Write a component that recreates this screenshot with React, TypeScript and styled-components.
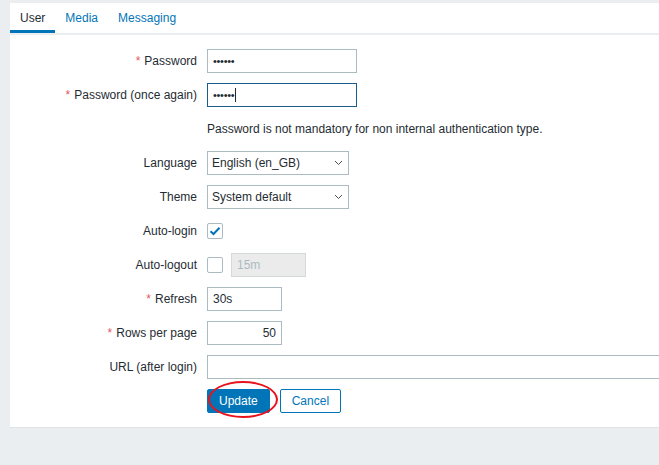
import React from "react";
import styled, { createGlobalStyle } from "styled-components";

const GlobalStyle = createGlobalStyle`
	html, body {
		margin: 0;
		padding: 0;
		background: #ebeef0;
		font-family: Arial, "Liberation Sans", sans-serif;
		font-size: 12px;
		color: #1f2c33;
		overflow: hidden;
	}
`;

const Page = styled.div`
	width: 659px;
	height: 465px;
	padding: 3px 0 0 10px;
	box-sizing: border-box;
	overflow: hidden;
`;

const Panel = styled.div`
	width: 700px;
	height: 425px;
	background: #fff;
	border-bottom: 1px solid #dfe4e7;
	box-sizing: border-box;
`;

const TabList = styled.div`
	display: flex;
	height: 30px;
	border-bottom: 2px solid #ebeef0;
`;

const Tab = styled.div<{ $active?: boolean }>`
	display: flex;
	align-items: center;
	padding: 0 10px;
	height: 30px;
	margin-bottom: -2px;
	color: ${(p) => (p.$active ? "#1f2c33" : "#0275b8")};
	border-bottom: 3px solid ${(p) => (p.$active ? "#0275b8" : "transparent")};
	box-sizing: border-box;
	padding-top: 2px;
	cursor: pointer;
`;

const Form = styled.div`
	display: grid;
	grid-template-columns: 187px auto;
	column-gap: 10px;
	row-gap: 10px;
	padding-top: 14px;
	align-items: center;
`;

const Label = styled.label`
	text-align: right;
	line-height: 24px;
	white-space: nowrap;
`;

const Req = styled.span`
	color: #e45959;
	margin-right: 4px;
`;

const Field = styled.div`
	display: flex;
	align-items: center;
	gap: 8px;
	min-height: 24px;
`;

const TextInput = styled.div<{ $w: number; $focus?: boolean; $disabled?: boolean; $right?: boolean }>`
	width: ${(p) => p.$w}px;
	height: 24px;
	box-sizing: border-box;
	border: 1px solid ${(p) => (p.$focus ? "#1a5c8c" : p.$disabled ? "#d4d9dc" : "#acbbc2")};
	background: ${(p) => (p.$disabled ? "#ebebeb" : "#fff")};
	color: ${(p) => (p.$disabled ? "#acbbc2" : "#1f2c33")};
	padding: 0 5px;
	display: flex;
	align-items: center;
	justify-content: ${(p) => (p.$right ? "flex-end" : "flex-start")};
	flex-shrink: 0;
`;

const Dots = styled.span`
	font-size: 11px;
	letter-spacing: -0.3px;
	line-height: 1;
`;

const Caret = styled.span`
	display: inline-block;
	width: 1px;
	height: 14px;
	background: #1f2c33;
	margin-left: 1px;
`;

const Select = styled.div<{ $w: number }>`
	width: ${(p) => p.$w}px;
	height: 24px;
	box-sizing: border-box;
	border: 1px solid #acbbc2;
	padding: 0 5px 0 4px;
	display: flex;
	align-items: center;
	justify-content: space-between;
`;

const Hint = styled.div`
	line-height: 24px;
	white-space: nowrap;
`;

const Box = styled.div`
	width: 16px;
	height: 16px;
	box-sizing: border-box;
	border: 1px solid #acbbc2;
	border-radius: 2px;
	display: flex;
	align-items: center;
	justify-content: center;
`;

const Buttons = styled.div`
	display: flex;
	gap: 10px;
	position: relative;
`;

const Button = styled.button<{ $primary?: boolean }>`
	height: 24px;
	padding: 0 11px;
	font-family: inherit;
	font-size: 12px;
	border-radius: 2px;
	border: 1px solid #0275b8;
	background: ${(p) => (p.$primary ? "#0275b8" : "#fff")};
	color: ${(p) => (p.$primary ? "#fff" : "#0275b8")};
	cursor: pointer;
`;

const Circle = styled.div`
	position: absolute;
	left: 1px;
	top: -8px;
	width: 70px;
	height: 37px;
	border: 2px solid #e8141b;
	border-radius: 50%;
	box-sizing: border-box;
	pointer-events: none;
`;

const Chevron = () => (
	<svg width="9" height="6" viewBox="0 0 9 6">
		<path d="M1 1l3.5 3.5L8 1" fill="none" stroke="#4f4f4f" strokeWidth="1" />
	</svg>
);

const Check = () => (
	<svg width="12" height="10" viewBox="0 0 12 10">
		<path d="M1.5 5.2l3 2.8L10.5 1.8" fill="none" stroke="#0275b8" strokeWidth="2" />
	</svg>
);

const Required = ({ children }: { children: React.ReactNode }) => (
	<Label>
		<Req>*</Req>
		{children}
	</Label>
);

export default function App() {
	return (
		<Page>
			<GlobalStyle />
			<Panel>
				<TabList>
					<Tab $active>User</Tab>
					<Tab>Media</Tab>
					<Tab>Messaging</Tab>
				</TabList>
				<Form>
					<Required>Password</Required>
					<Field>
						<TextInput $w={150}>
							<Dots>••••••</Dots>
						</TextInput>
					</Field>

					<Required>Password (once again)</Required>
					<Field>
						<TextInput $w={150} $focus>
							<Dots>••••••</Dots>
							<Caret />
						</TextInput>
					</Field>

					<span />
					<Hint>Password is not mandatory for non internal authentication type.</Hint>

					<Label>Language</Label>
					<Field>
						<Select $w={142}>
							English (en_GB)
							<Chevron />
						</Select>
					</Field>

					<Label>Theme</Label>
					<Field>
						<Select $w={142}>
							System default
							<Chevron />
						</Select>
					</Field>

					<Label>Auto-login</Label>
					<Field>
						<Box>
							<Check />
						</Box>
					</Field>

					<Label>Auto-logout</Label>
					<Field>
						<Box />
						<TextInput $w={75} $disabled>
							15m
						</TextInput>
					</Field>

					<Required>Refresh</Required>
					<Field>
						<TextInput $w={75}>30s</TextInput>
					</Field>

					<Required>Rows per page</Required>
					<Field>
						<TextInput $w={75} $right>
							50
						</TextInput>
					</Field>

					<Label>URL (after login)</Label>
					<Field>
						<TextInput $w={453} />
					</Field>

					<span />
					<Buttons>
						<Button $primary>Update</Button>
						<Button>Cancel</Button>
						<Circle />
					</Buttons>
				</Form>
			</Panel>
		</Page>
	);
}
